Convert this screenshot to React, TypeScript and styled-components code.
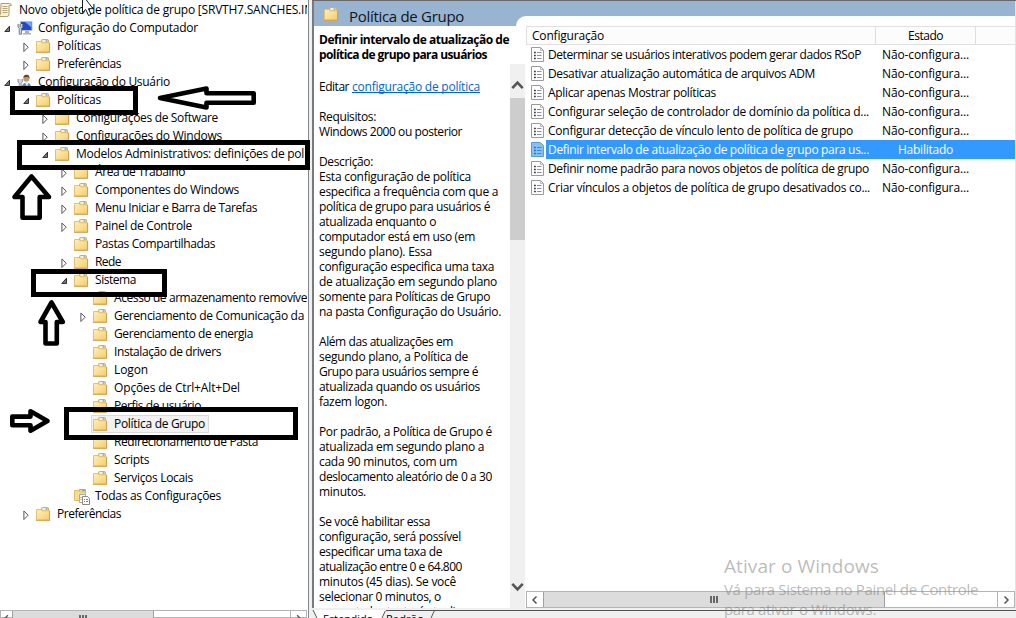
import React, { useLayoutEffect, useRef, useState } from "react";
import styled, { createGlobalStyle, css } from "styled-components";

const Global = createGlobalStyle`
  * { box-sizing: border-box; }
  body { margin: 0; background: #fff; }
`;

const Window = styled.div`
  position: relative;
  display: flex;
  width: 1016px;
  height: 618px;
  overflow: hidden;
  background: #f0f0f0;
  color: #000;
  font: 12px/18px "Open Sans", "Segoe UI", sans-serif;
`;

/* Label: one line of text spread over a known width */

const LabelText = styled.span<{ $bold?: boolean }>`
  white-space: pre;
  flex: none;
  display: inline-block;
  font-weight: ${(p) => (p.$bold ? 700 : 400)};
`;

function Label({ text, width, bold }: { text: string; width: number; bold?: boolean }) {
  const ref = useRef<HTMLSpanElement>(null);
  const [spacing, setSpacing] = useState(0);
  useLayoutEffect(() => {
    const el = ref.current;
    if (el) setSpacing((width - el.getBoundingClientRect().width) / text.length);
  }, [text, width]);
  return (
    <LabelText ref={ref} $bold={bold} style={{ letterSpacing: spacing }}>
      {text}
    </LabelText>
  );
}

/* Icons */

const Glyph = styled.svg`
  display: block;
  flex: none;
`;

const FolderIcon = () => (
  <Glyph width="16" height="16" viewBox="0 0 16 16">
    <defs>
      <linearGradient id="folder" x1="0" y1="0" x2="1" y2="1">
        <stop offset="0" stopColor="#fdeebb" />
        <stop offset="0.5" stopColor="#fbdf92" />
        <stop offset="1" stopColor="#f2ca6e" />
      </linearGradient>
    </defs>
    <path d="M5.500 5V2.500q0-1 1-1h5q1 0 1 1V5z" fill="#f3dc9c" stroke="#d3ad5a" />
    <path d="M7 3h4.500" stroke="#fff" strokeWidth="1.200" />
    <path d="M9.500 3h2" stroke="#3d9de8" strokeWidth="1.200" />
    <path d="M.5 14V3.500h4.500l1.200 1.300h7.300V14z" fill="url(#folder)" stroke="#e3c078" />
    <path d="M0 14.300h14M13.600 5v9" stroke="#cca04c" fill="none" />
  </Glyph>
);

const ScrollIcon = () => (
  <Glyph width="16" height="16" viewBox="0 0 16 16">
    <path d="M3 1.500h8.500q1.800 0 1.800 2h-2.300v9q0 2-2 2h-7q-1.500 0-1.500-2h2z" fill="#fbf3d8" stroke="#b39b6b" />
    <path d="M4.500 4.500h5M4.500 6.500h5M4.500 8.500h5M4.500 10.500h5" stroke="#b5a67e" />
  </Glyph>
);

const ComputerIcon = () => (
  <Glyph width="16" height="16" viewBox="0 0 16 16">
    <path d="M3.500 1.500h11.500v9h-11.500z" fill="#2747c9" stroke="#b4bfcc" />
    <path d="M8 2h6.500v5.500z" fill="#6ba5f5" />
    <path d="M8 11h4v2h2v1.500h-8v-1.500h2z" fill="#a9b0b8" />
    <path d="M1 4v3l1.200 1.200v6h2.300v-6l1.200-1.200v-3M3.300 4v3" fill="#c9d3dc" stroke="#637889" strokeWidth=".9" />
  </Glyph>
);

const UserIcon = () => (
  <Glyph width="16" height="16" viewBox="0 0 16 16">
    <path d="M4.500 15q0-6 5-6.500 5 .5 5 6.500z" fill="#4c8fca" />
    <path d="M8 8.500h3.500l-1.500 4z" fill="#eef6fb" />
    <circle cx="9.300" cy="4.800" r="3" fill="#c99869" />
    <path d="M6.300 3.500q.5-3 3.500-2.800t2.700 4l-1.500-2z" fill="#59402c" />
    <path d="M1 5v3l1.200 1.200v5.300h2v-5.300l1.200-1.200v-3" fill="#ced6dc" stroke="#71808c" strokeWidth=".8" />
  </Glyph>
);

const AllSettingsIcon = () => (
  <Glyph width="16" height="17" viewBox="0 0 16 17">
    <path d="M5.500 3V1.500h6V5" fill="#ecd28a" stroke="#d0a850" />
    <path d="M8.500 2.500h2" stroke="#3a9be8" />
    <path d="M.5 2.500h4l1 1.500h6v8.500H.5z" fill="#fadc8c" stroke="#dfba66" />
    <path d="M5.500 6.500h6v8h-6z" fill="#fff" stroke="#aaa" />
    <path d="M8.500 8.500h5l2 2v6h-7z" fill="#fff" stroke="#888" />
    <path d="M10 11.500h1M12 11.500h2M10 13.500h1M12 13.500h2M6.500 9.500h1M6.500 11.500h1" stroke="#778" />
  </Glyph>
);

const PolicyIcon = ({ selected }: { selected?: boolean }) => (
  <Glyph width="14" height="16" viewBox="0 0 14 16">
    <path
      d="M.5 .5h9l3 3v11h-12z"
      fill={selected ? "#86c0f8" : "#fdfdfd"}
      stroke={selected ? "#5b9bd8" : "#9a9a9a"}
    />
    <path d="M9.500 .5v3h3" fill="none" stroke={selected ? "#9ccc5a" : "#b8b8b8"} />
    <path
      d="M3 5.500h1.800M3 8.500h1.800M3 11.500h1.800"
      stroke={selected ? "#2a6cb0" : "#3a3a3a"}
      strokeWidth="1.400"
    />
    <path d="M6 5.500h4.500M6 8.500h4.500M6 11.500h4.500" stroke={selected ? "#4583c4" : "#8f8aa8"} />
  </Glyph>
);

const Chevron = ({ dir, size = 7 }: { dir: "left" | "right" | "up" | "down"; size?: number }) => {
  const d = {
    left: "M6.500 1.500L3 5l3.500 3.500",
    right: "M3.500 1.500L7 5l-3.500 3.500",
    up: "M1 7l4-4.200L9 7",
    down: "M1 3l4 4.200L9 3",
  }[dir];
  return (
    <Glyph width={size} height={size} viewBox="0 0 10 10">
      <path d={d} fill="none" stroke="#555" strokeWidth={dir === "up" || dir === "down" ? 2 : 1.5} />
    </Glyph>
  );
};

/* Tree */

const TreePane = styled.div`
  width: 309px;
  height: 618px;
  flex: none;
  display: flex;
  flex-direction: column;
  background: #fff;
  border-right: 1px solid #828790;
`;

const Tree = styled.div`
  flex: 1;
  width: 307px;
  padding-top: 1px;
  overflow: hidden;
`;

const TreeRow = styled.div<{ $level: number }>`
  display: flex;
  align-items: center;
  height: 18px;
  padding-left: ${(p) => Math.max(0, (p.$level - 1) * 19)}px;
  margin-left: ${(p) => (p.$level === 0 ? -19 : 0)}px;
`;

const Expander = styled.span`
  width: 17px;
  height: 16px;
  flex: none;
  padding: 4px 0 0 4px;
`;

const TreeItem = styled.span<{ $selected?: boolean }>`
  display: flex;
  align-items: center;
  height: 18px;
  gap: 5px;
  ${(p) =>
    p.$selected &&
    css`
      width: 118px;
      margin-left: -2px;
      padding-left: 1px;
      border: 1px solid #dadada;
      background: #f2f2f2;
    `}
`;

type IconKind = "folder" | "scroll" | "computer" | "user" | "all";
type Node = [level: number, text: string, width: number, state?: "open" | "closed" | "", icon?: IconKind];

const nodes: Node[] = [
  [0, "Novo objeto de política de grupo [SRVTH7.SANCHES.IN", 294, "", "scroll"],
  [1, "Configuração do Computador", 160, "open", "computer"],
  [2, "Políticas", 44, "closed"],
  [2, "Preferências", 64, "closed"],
  [1, "Configuração do Usuário", 132, "open", "user"],
  [2, "Políticas", 44, "open"],
  [3, "Configurações de Software", 142, "closed"],
  [3, "Configurações do Windows", 146, "closed"],
  [3, "Modelos Administrativos: definições de pol", 228, "open"],
  [4, "Área de Trabalho", 90, "closed"],
  [4, "Componentes do Windows", 144, "closed"],
  [4, "Menu Iniciar e Barra de Tarefas", 162, "closed"],
  [4, "Painel de Controle", 97, "closed"],
  [4, "Pastas Compartilhadas", 120],
  [4, "Rede", 26, "closed"],
  [4, "Sistema", 41, "open"],
  [5, "Acesso de armazenamento removíve", 193],
  [5, "Gerenciamento de Comunicação da", 190, "closed"],
  [5, "Gerenciamento de energia", 139],
  [5, "Instalação de drivers", 107],
  [5, "Logon", 34],
  [5, "Opções de Ctrl+Alt+Del", 126],
  [5, "Perfis de usuário", 87],
  [5, "Política de Grupo", 91],
  [5, "Redirecionamento de Pasta", 144],
  [5, "Scripts", 35],
  [5, "Serviços Locais", 79],
  [4, "Todas as Configurações", 126, "", "all"],
  [2, "Preferências", 64, "closed"],
];

const SELECTED_NODE = 23;

const icons: Record<IconKind, React.FC> = {
  folder: FolderIcon,
  scroll: ScrollIcon,
  computer: ComputerIcon,
  user: UserIcon,
  all: AllSettingsIcon,
};

const ExpanderIcon = ({ open }: { open: boolean }) => (
  <Glyph width="8" height="10" viewBox="0 0 8 10">
    {open ? (
      <path d="M5.500 2.200V7.500H.8z" fill="#7a7a7a" stroke="#303030" />
    ) : (
      <path d="M.9 1V9.500L5.200 5.200z" fill="#fff" stroke="#555" />
    )}
  </Glyph>
);

const TreeView = () => (
  <Tree>
    {nodes.map(([level, text, width, state, icon = "folder"], i) => {
      const Icon = icons[icon];
      return (
        <TreeRow key={i} $level={level}>
          <Expander>{state ? <ExpanderIcon open={state === "open"} /> : null}</Expander>
          <TreeItem $selected={i === SELECTED_NODE}>
            <Icon />
            <Label text={text} width={width} />
          </TreeItem>
        </TreeRow>
      );
    })}
  </Tree>
);

/* Scroll bars */

const HBar = styled.div<{ $width: number; $height: number }>`
  display: flex;
  flex: none;
  width: ${(p) => p.$width}px;
  height: ${(p) => p.$height}px;
  border: 1px solid #b4b4b4;
  background: #fff;
`;

const BarButton = styled.div<{ $width: number; $side: "left" | "right" }>`
  width: ${(p) => p.$width}px;
  height: 15px;
  flex: none;
  display: flex;
  align-items: center;
  justify-content: center;
  ${(p) => (p.$side === "right" ? "border-left: 1px solid #b4b4b4; margin-left: auto;" : "")}
`;

const HThumb = styled.div<{ $width: number }>`
  width: ${(p) => p.$width}px;
  height: 15px;
  flex: none;
  display: flex;
  align-items: center;
  justify-content: center;
  gap: 1px;
  background: #dcdcdc;
  border: solid #a0a0a0;
  border-width: 0 1px;
`;

const Grip = styled.i`
  width: 2px;
  height: 7px;
  background: #686868;
`;

const Thumb = ({ width }: { width: number }) => (
  <HThumb $width={width}>
    <Grip />
    <Grip />
    <Grip />
  </HThumb>
);

/* Right side */

const Main = styled.div`
  width: 704px;
  height: 618px;
  margin-left: 3px;
  display: flex;
  flex-direction: column;
  border-top: 1px solid #696969;
`;

const Body = styled.div`
  height: 607px;
  flex: none;
  display: flex;
  background: #fff;
  border-left: 2px solid #7a7a7a;
  border-right: 1px solid #e3e3e3;
`;

const Extended = styled.div`
  width: 212px;
  flex: none;
  display: flex;
  flex-direction: column;
`;

const Banner = styled.div`
  height: 25px;
  flex: none;
  display: flex;
  gap: 9px;
  padding-left: 10px;
  background: #99b4d1;
  color: #10151c;
  font-size: 15px;
  line-height: 31px;
  svg { margin-top: 5px; }
`;

const Heading = styled.div`
  height: 38px;
  flex: none;
  padding: 6px 0 0 5px;
  line-height: 15px;
`;

const Scroller = styled.div`
  flex: 1;
  min-height: 0;
  display: flex;
`;

const Description = styled.div`
  width: 196px;
  flex: none;
  padding: 15px 0 0 5px;
  overflow: hidden;
  line-height: 15px;
`;

const Line = styled.div`
  display: flex;
  gap: 3px;
  height: 15px;
`;

const Link = styled.a`
  height: 14px;
  color: #0066cc;
  border-bottom: 1px solid #0066cc;
`;

const VBar = styled.div`
  width: 15px;
  flex: none;
  display: flex;
  flex-direction: column;
  align-items: center;
  background: #f0f0f0;
`;

const VButton = styled.div<{ $height: number; $top: number }>`
  height: ${(p) => p.$height}px;
  padding-top: ${(p) => p.$top}px;
`;

const VThumb = styled.div`
  width: 15px;
  height: 142px;
  background: #cdcdcd;
  margin-bottom: auto;
`;

const description: [string, number][] = [
  ["Requisitos:", 57],
  ["Windows 2000 ou posterior", 143],
  ["", 0],
  ["Descrição:", 54],
  ["Esta configuração de política", 152],
  ["especifica a frequência com que a", 179],
  ["política de grupo para usuários é", 171],
  ["atualizada enquanto o", 117],
  ["computador está em uso (em", 156],
  ["segundo plano). Essa", 113],
  ["configuração especifica uma taxa", 175],
  ["de atualização em segundo plano", 178],
  ["somente para Políticas de Grupo", 171],
  ["na pasta Configuração do Usuário.", 182],
  ["", 0],
  ["Além das atualizações em", 134],
  ["segundo plano, a Política de", 149],
  ["Grupo para usuários sempre é", 159],
  ["atualizada quando os usuários", 161],
  ["fazem logon.", 68],
  ["", 0],
  ["Por padrão, a Política de Grupo é", 173],
  ["atualizada em segundo plano a", 165],
  ["cada 90 minutos, com um", 138],
  ["deslocamento aleatório de 0 a 30", 173],
  ["minutos.", 47],
  ["", 0],
  ["Se você habilitar essa", 111],
  ["configuração, será possível", 142],
  ["especificar uma taxa de", 123],
  ["atualização entre 0 e 64.800", 143],
  ["minutos (45 dias). Se você", 137],
  ["selecionar 0 minutos, o", 122],
  ["computador tentará atualizar", 152],
];

const ListSide = styled.div`
  flex: 1;
  min-width: 0;
  display: flex;
  flex-direction: column;
`;

const BannerEdge = styled.div`
  height: 25px;
  flex: none;
  display: flex;
  align-items: flex-end;
  margin-left: -10px;
  background: #99b4d1;
`;

const Sheet = styled.div`
  flex: 1;
  height: 10px;
  background: #fff;
  border-top-left-radius: 10px;
`;

const HeaderRow = styled.div`
  height: 19px;
  flex: none;
  display: flex;
  background: #fcfcfc;
  border: 1px solid #e0e0e0;
  border-right: 0;
`;

const HeaderCell = styled.div<{ $width: number; $center?: boolean }>`
  width: ${(p) => p.$width}px;
  display: flex;
  justify-content: ${(p) => (p.$center ? "center" : "flex-start")};
  padding-left: ${(p) => (p.$center ? 0 : 5)}px;
  border-right: 1px solid #dedede;
`;

const List = styled.div`
  flex: 1;
  padding: 0 0 0 5px;
`;

const ListRow = styled.div`
  display: flex;
  height: 19px;
`;

const RowIcon = styled.div`
  width: 15px;
  padding-top: 2px;
  flex: none;
`;

const RowText = styled.div<{ $selected?: boolean }>`
  flex: 1;
  display: flex;
  align-items: center;
  padding: 1px 0 0 2px;
  ${(p) => p.$selected && "background: #3399ff; color: #fff;"}
`;

const NameCell = styled.span`
  display: flex;
  width: 327px;
`;

const StateCell = styled.span`
  display: flex;
  justify-content: center;
  width: 101px;
  padding: 0 7px;
`;

const rows: [string, number, boolean?][] = [
  ["Determinar se usuários interativos podem gerar dados RSoP", 313],
  ["Desativar atualização automática de arquivos ADM", 267],
  ["Aplicar apenas Mostrar políticas", 168],
  ["Configurar seleção de controlador de domínio da política d...", 321],
  ["Configurar detecção de vínculo lento de política de grupo", 305],
  ["Definir intervalo de atualização de política de grupo para us...", 321, true],
  ["Definir nome padrão para novos objetos de política de grupo", 321],
  ["Criar vínculos a objetos de política de grupo desativados co...", 322],
];

const Tabs = styled.div`
  position: relative;
  height: 8px;
  flex: none;
  margin-top: 2px;
  display: flex;
  gap: 13px;
  padding-left: 11px;
  overflow: hidden;
`;

const TabShape = styled.svg`
  position: absolute;
  left: 0;
  top: 0;
`;

const TabText = styled.span`
  position: relative;
  font-size: 11px;
  line-height: 17px;
`;

/* Overlays */

const Watermark = styled.div`
  position: absolute;
  left: 724px;
  top: 553px;
  color: rgba(120, 120, 120, 0.5);
  font-size: 15px;
  line-height: 20px;
`;

const WatermarkTitle = styled.div`
  font-size: 19px;
  line-height: 26px;
`;

const Marks = styled.svg`
  position: absolute;
  left: 0;
  top: 0;
`;

export default function App() {
  return (
    <Window>
      <Global />
      <TreePane>
        <TreeView />
        <HBar $width={307} $height={8}>
          <BarButton $width={11} $side="left"><Chevron dir="left" size={9} /></BarButton>
          <Thumb width={142} />
          <BarButton $width={16} $side="right"><Chevron dir="right" size={9} /></BarButton>
        </HBar>
      </TreePane>
      <Main>
        <Body>
          <Extended>
            <Banner>
              <FolderIcon />
              <Label text="Política de Grupo" width={115} />
            </Banner>
            <Heading>
              <Line><Label bold text="Definir intervalo de atualização de" width={190} /></Line>
              <Line><Label bold text="política de grupo para usuários" width={168} /></Line>
            </Heading>
            <Scroller>
              <Description>
                <Line>
                  <Label text="Editar" width={30} />
                  <Link><Label text="configuração de política" width={128} /></Link>
                </Line>
                <Line />
                {description.map(([text, width], i) => (
                  <Line key={i}>{text ? <Label text={text} width={width} /> : null}</Line>
                ))}
              </Description>
              <VBar>
                <VButton $height={34} $top={15}><Chevron dir="up" size={13} /></VButton>
                <VThumb />
                <VButton $height={28} $top={0}><Chevron dir="down" size={13} /></VButton>
              </VBar>
            </Scroller>
          </Extended>
          <ListSide>
            <BannerEdge><Sheet /></BannerEdge>
            <HeaderRow>
              <HeaderCell $width={349}><Label text="Configuração" width={72} /></HeaderCell>
              <HeaderCell $width={100} $center><Label text="Estado" width={35} /></HeaderCell>
            </HeaderRow>
            <List>
              {rows.map(([text, width, selected]) => (
                <ListRow key={text}>
                  <RowIcon><PolicyIcon selected={selected} /></RowIcon>
                  <RowText $selected={selected}>
                    <NameCell><Label text={text} width={width} /></NameCell>
                    <StateCell>
                      {selected ? (
                        <Label text="Habilitado" width={55} />
                      ) : (
                        <Label text="Não-configura..." width={87} />
                      )}
                    </StateCell>
                  </RowText>
                </ListRow>
              ))}
            </List>
            <HBar $width={489} $height={17}>
              <BarButton $width={16} $side="left"><Chevron dir="left" size={10} /></BarButton>
              <Thumb width={342} />
              <BarButton $width={17} $side="right"><Chevron dir="right" size={10} /></BarButton>
            </HBar>
          </ListSide>
        </Body>
        <Tabs>
          <TabShape width="704" height="8" viewBox="0 0 704 8">
            <path d="M1 0l4 8h65l4-8z" fill="#fff" />
            <path d="M1 0l4 8M70 8l3-6.500q.5-1 2-1H704M119 8l3-6.500q.5-1 2-1" fill="none" stroke="#555" />
          </TabShape>
          <TabText><Label text="Estendido" width={50} /></TabText>
          <TabText><Label text="Padrão" width={38} /></TabText>
        </Tabs>
      </Main>
      <Watermark>
        <WatermarkTitle><Label text="Ativar o Windows" width={155} /></WatermarkTitle>
        <div><Label text="Vá para Sistema no Painel de Controle" width={254} /></div>
        <div><Label text="para ativar o Windows." width={152} /></div>
      </Watermark>
      <Marks width="1016" height="618" viewBox="0 0 1016 618">
        <path d="M82.500-5V12.500l3.300-3 2.700 6 2.500-1-2.600-5.800h4.600z" fill="#fff" stroke="#000" strokeWidth=".9" />
        <g fill="none" stroke="#000" strokeWidth="5">
          <rect x="12.500" y="88.500" width="123" height="24" />
          <rect x="19.500" y="142.500" width="288" height="25" />
          <rect x="33.500" y="271.500" width="131" height="23" />
          <rect x="66.500" y="409.500" width="229" height="28" />
        </g>
        <g fill="#fff" stroke="#000" strokeWidth="4.600" strokeLinejoin="round">
          <path d="M160 98l46.500-9.500v4.800h47.200v9.500h-47.200v4.700z" />
          <path d="M31.500 176.500L14.500 197h8v20.700h17.200V197H49z" />
          <path d="M51.500 302.500L40.500 322h5v21.500h11.300V322h6z" />
          <path d="M12.300 416.600h18.200V411.300L47.500 421l-17 9.700v-5.400H12.300z" />
        </g>
      </Marks>
    </Window>
  );
}
